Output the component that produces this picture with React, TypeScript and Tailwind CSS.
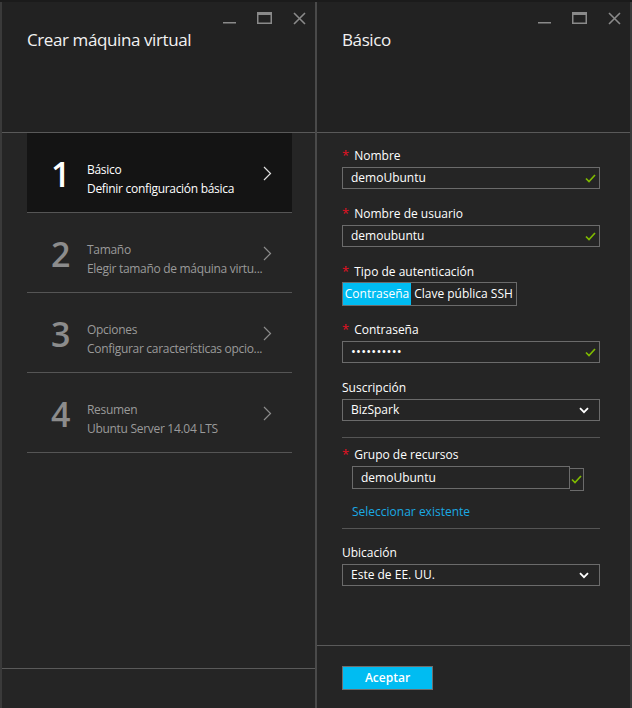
import React from "react";

const font = { fontFamily: '"Open Sans", "Noto Sans", sans-serif' };

function WindowControls() {
  return (
    <div className="flex justify-end items-start gap-[21px] pt-[10px] pr-[9px] h-[24px]">
      <svg width="13" height="13" viewBox="0 0 13 13" className="mt-[1px]">
        <rect x="0" y="9" width="13" height="1.5" fill="#8a8a8a" />
      </svg>
      <svg width="15" height="12" viewBox="0 0 15 12">
        <rect x="0.75" y="0.75" width="13.5" height="10.5" fill="none" stroke="#8a8a8a" strokeWidth="1.5" />
        <rect x="0" y="0" width="15" height="3" fill="#8a8a8a" />
      </svg>
      <svg width="13" height="13" viewBox="0 0 13 13">
        <path d="M1 1L12 12M12 1L1 12" stroke="#8a8a8a" strokeWidth="1.6" />
      </svg>
    </div>
  );
}

function Header({ title }: { title: string }) {
  return (
    <div className="h-[131px] border-b border-[#595959] bg-[#222222] shrink-0">
      <WindowControls />
      <div className="pl-[25px] pt-[2px] text-[17px] leading-[24px] tracking-[-0.4px] text-[#f2f2f2]">{title}</div>
    </div>
  );
}

function Chevron() {
  return (
    <svg width="9" height="15" viewBox="0 0 9 15">
      <path d="M1 1L7.5 7.5L1 14" fill="none" stroke="currentColor" strokeWidth="1.2" />
    </svg>
  );
}

const steps = [
  { n: "1", title: "Básico", sub: "Definir configuración básica", active: true },
  { n: "2", title: "Tamaño", sub: "Elegir tamaño de máquina virtu...", active: false },
  { n: "3", title: "Opciones", sub: "Configurar características opcio...", active: false },
  { n: "4", title: "Resumen", sub: "Ubuntu Server 14.04 LTS", active: false },
];

function Step({ n, title, sub, active }: { n: string; title: string; sub: string; active: boolean }) {
  return (
    <div
      className={
        active
          ? "h-[80px] border-b border-[#555555] bg-[#141414] flex items-center pl-[24px] pr-[20px] text-white"
          : "h-[80px] border-b border-[#555555] flex items-center pl-[24px] pr-[20px] text-[#9a9a9a]"
      }
    >
      <div className={active ? "w-[36px] text-[34px] leading-none font-semibold text-white mt-[3px]" : "w-[36px] text-[34px] leading-none font-semibold text-[#8c8c8c] mt-[3px]"}>
        {n}
      </div>
      <div className="flex-1 min-w-0 text-[12px] leading-[19px] tracking-[-0.3px] mt-[12px]">
        <div>{title}</div>
        <div className="whitespace-nowrap">{sub}</div>
      </div>
      <div className={active ? "text-[#e0e0e0] mt-[1px]" : "text-[#8c8c8c] mt-[1px]"}>
        <Chevron />
      </div>
    </div>
  );
}

function Label({ text, req }: { text: string; req?: boolean }) {
  return (
    <div className="text-[12px] leading-[17px] text-white flex">
      {req && <span className="text-[#e81123] mr-[5px] text-[13px]">*</span>}
      {text}
    </div>
  );
}

function Check() {
  return (
    <svg width="11" height="9" viewBox="0 0 11 9">
      <path d="M1 4.5L4 7.5L10 1" fill="none" stroke="#7fba00" strokeWidth="1.7" />
    </svg>
  );
}

function Input({ value, password }: { value: string; password?: boolean }) {
  return (
    <div className="mt-[3px] h-[22px] w-[258px] border border-[#6b6b6b] flex items-center justify-between pl-[8px] pr-[3px]">
      <span className={password ? "text-[13px] text-white tracking-[0.2px]" : "text-[12px] text-white"}>{value}</span>
      <Check />
    </div>
  );
}

function Select({ value }: { value: string }) {
  return (
    <div className="mt-[3px] h-[22px] w-[258px] border border-[#6b6b6b] flex items-center justify-between pl-[8px] pr-[10px]">
      <span className="text-[12px] text-white">{value}</span>
      <svg width="10" height="7" viewBox="0 0 10 7">
        <path d="M1 1.2L5 5.2L9 1.2" fill="none" stroke="#ffffff" strokeWidth="1.8" />
      </svg>
    </div>
  );
}

export default function App() {
  return (
    <div className="w-[632px] h-[708px] bg-[#252525] flex flex-col overflow-hidden" style={font}>
      <div className="h-[2px] bg-[#1b1b1b] shrink-0" />
      <div className="flex flex-1 min-h-0">
        {/* left blade */}
        <div className="w-[317px] border-l-2 border-r-2 border-l-[#3a3a3a] border-r-[#4a4a4a] flex flex-col">
          <Header title="Crear máquina virtual" />
          <div className="flex-1 border-b border-[#5a5a5a]">
            <div className="ml-[25px] w-[265px]">
              {steps.map((s) => (
                <Step key={s.n} {...s} />
              ))}
            </div>
          </div>
          <div className="h-[39px] shrink-0" />
        </div>

        {/* right blade */}
        <div className="flex-1 border-r-2 border-r-[#3a3a3a] flex flex-col">
          <Header title="Básico" />
          <div className="flex-1 border-b border-[#5a5a5a] pl-[25px] pt-[14px]">
            <Label text="Nombre" req />
            <Input value="demoUbuntu" />

            <div className="mt-[16px]">
              <Label text="Nombre de usuario" req />
              <Input value="demoubuntu" />
            </div>

            <div className="mt-[16px]">
              <Label text="Tipo de autenticación" req />
              <div className="mt-[2px] h-[24px] w-[175px] border border-[#6b6b6b] flex text-[12px]">
                <div className="w-[68px] bg-[#00bcf2] text-white flex items-center justify-center">Contraseña</div>
                <div className="flex-1 text-white flex items-center justify-center">Clave pública SSH</div>
              </div>
            </div>

            <div className="mt-[15px]">
              <Label text="Contraseña" req />
              <Input value="••••••••••" password />
            </div>

            <div className="mt-[16px]">
              <Label text="Suscripción" />
              <Select value="BizSpark" />
            </div>

            <div className="mt-[16px] w-[258px] border-t border-[#555555]" />

            <div className="mt-[8px]">
              <Label text="Grupo de recursos" req />
              <div className="mt-[3px] ml-[10px] flex items-start">
                <div className="h-[23px] w-[218px] border border-[#6b6b6b] flex items-center pl-[8px] text-[12px] text-white">
                  demoUbuntu
                </div>
                <div className="mt-[2px] h-[23px] w-[14px] border border-l-0 border-[#6b6b6b] flex items-center justify-center">
                  <Check />
                </div>
              </div>
              <div className="ml-[10px] mt-[12px] text-[12px] leading-[17px] text-[#1aa9e3]">Seleccionar existente</div>
            </div>

            <div className="mt-[8px] w-[258px] border-t border-[#555555]" />

            <div className="mt-[15px]">
              <Label text="Ubicación" />
              <Select value="Este de EE. UU." />
            </div>
          </div>
          <div className="h-[62px] shrink-0 pl-[25px] pt-[20px]">
            <div className="w-[91px] h-[24px] bg-[#00bcf2] border border-[#6e6e6e] flex items-center justify-center text-[12px] font-semibold text-white">
              Aceptar
            </div>
          </div>
        </div>
      </div>
    </div>
  );
}
